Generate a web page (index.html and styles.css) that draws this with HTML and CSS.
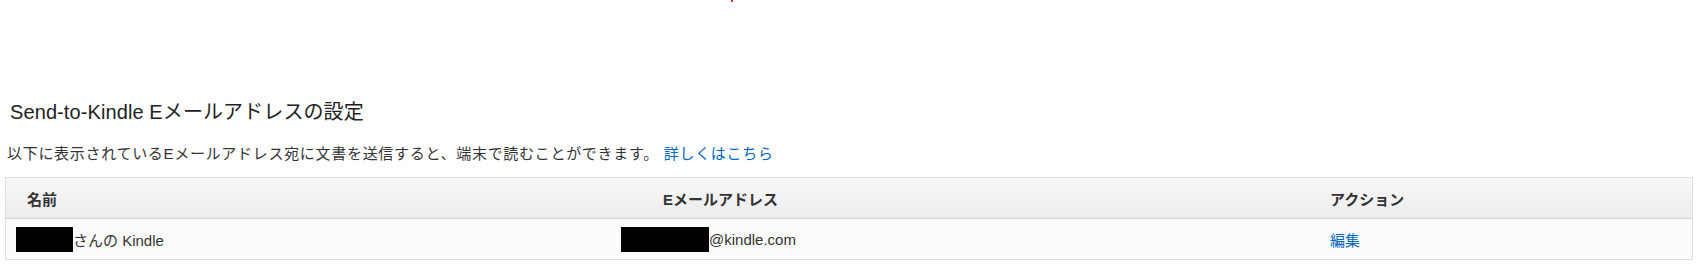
FILE: index.html
```html
<!DOCTYPE html>
<html lang="ja">
<head>
<meta charset="utf-8">
<title>Send-to-Kindle Eメールアドレスの設定</title>
<link rel="stylesheet" href="styles.css">
</head>
<body>
<span class="dot"></span>
<div class="page">
  <h1 class="title">Send-to-Kindle Eメールアドレスの設定</h1>
  <p class="desc">以下に表示されているEメールアドレス宛に文書を送信すると、端末で読むことができます。 <a class="link" href="#">詳しくはこちら</a></p>
  <div class="table">
    <div class="row head">
      <div class="cell h-name">名前</div>
      <div class="cell h-mail">Eメールアドレス</div>
      <div class="cell">アクション</div>
    </div>
    <div class="row body-row">
      <div class="cell"><span class="redact r1"></span>さんの Kindle</div>
      <div class="cell"><span class="redact r2"></span>@kindle.com</div>
      <div class="cell"><a class="link" href="#">編集</a></div>
    </div>
  </div>
</div>
</body>
</html>
```

FILE: styles.css
```css
html, body {
  margin: 0;
  padding: 0;
  background: #ffffff;
}
body {
  font-family: "Liberation Sans", "Noto Sans CJK JP", sans-serif;
  color: #333333;
  position: relative;
}
.dot {
  position: absolute;
  left: 731px;
  top: 0;
  width: 2px;
  height: 2px;
  background: #e0303a;
}
.page {
  padding: 100px 14px 0 5px;
}
.title {
  margin: 0 0 20px;
  padding-left: 5px;
  font-size: 20px;
  line-height: 24px;
  font-weight: normal;
  letter-spacing: 0.1px;
  color: #222222;
}
.desc {
  margin: 0 0 13px;
  padding-left: 2px;
  font-size: 15px;
  line-height: 20px;
  letter-spacing: 0.7px;
  color: #333333;
}
.link {
  color: #0066c0;
  text-decoration: none;
}
.table {
  border: 1px solid #dedede;
}
.row {
  display: grid;
  grid-template-columns: 605px 709px 1fr;
  align-items: center;
  height: 40px;
}
.head {
  background: linear-gradient(#f8f8f8, #ececec);
  border-bottom: 1px solid #d6d6d6;
  font-weight: bold;
  font-size: 15px;
  color: #333333;
}
.body-row {
  background: #fcfcfc;
  font-size: 15px;
  color: #333333;
}
.cell {
  padding-left: 10px;
  display: flex;
  align-items: center;
  white-space: nowrap;
}
.head .h-name {
  padding-left: 21px;
}
.head .h-mail {
  padding-left: 52px;
}
.redact {
  display: inline-block;
  height: 25px;
  background: #000000;
}
.r1 {
  width: 57px;
}
.r2 {
  width: 88px;
}
```
